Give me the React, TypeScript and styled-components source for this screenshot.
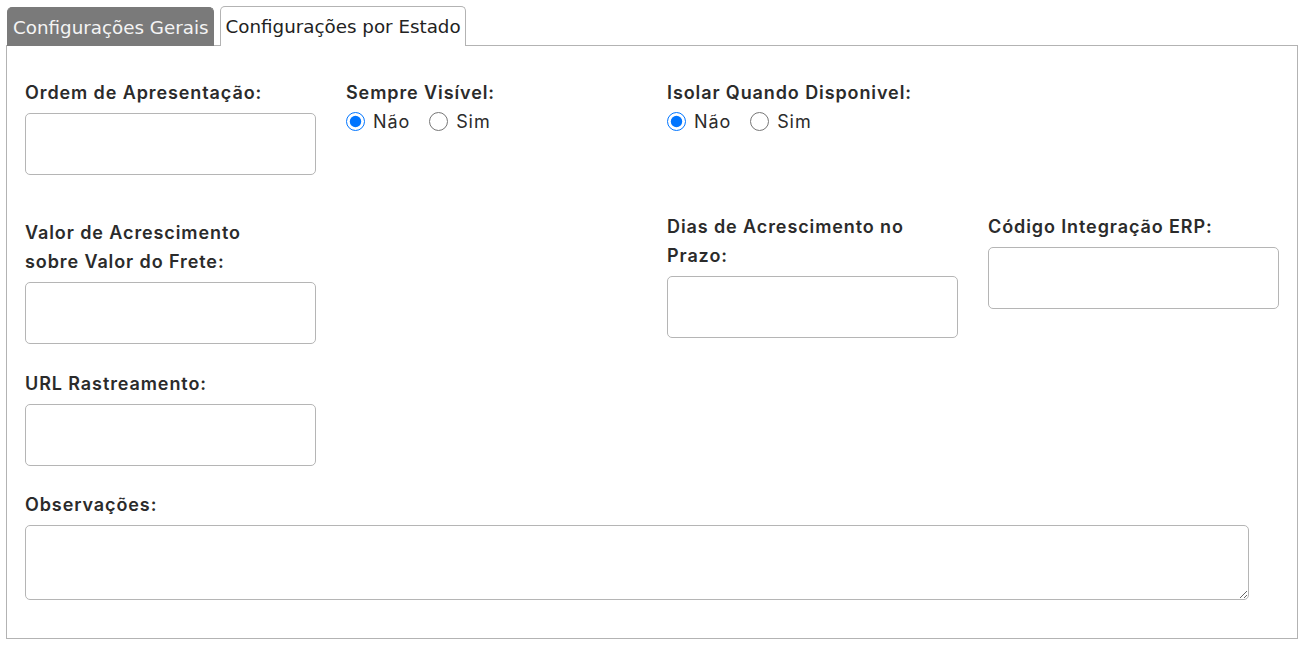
import React, { useState } from 'react';
import styled, { createGlobalStyle } from 'styled-components';

const GlobalStyle = createGlobalStyle`
  html, body {
    margin: 0;
    padding: 0;
    background: #ffffff;
  }
  * {
    box-sizing: border-box;
  }
`;

const labelFont = `'Inter', 'Open Sans', sans-serif`;

const S = {
  Page: styled.div`
    padding: 5px 4px 7px 6px;
  `,
  TabBar: styled.div`
    display: flex;
    align-items: flex-end;
    gap: 6px;
    padding-left: 1px;
    height: 40px;
  `,
  Tab: styled.div<{ $active?: boolean }>`
    display: flex;
    align-items: center;
    padding: 0 4px 0 5px;
    height: ${({ $active }) => ($active ? '39px' : '40px')};
    margin-bottom: -1px;
    border: 1px solid ${({ $active }) => ($active ? '#7a7a7a' : '#b3b3b3')};
    border-bottom: none;
    border-radius: 5px 5px 0 0;
    background: ${({ $active }) => ($active ? '#7a7a7a' : '#ffffff')};
    color: ${({ $active }) => ($active ? '#f4f4f4' : '#222222')};
    font-family: 'DejaVu Sans', Verdana, sans-serif;
    font-size: 18.3px;
    cursor: pointer;
  `,
  Panel: styled.div`
    border: 1px solid #b3b3b3;
    padding: 32px 18px 38px 18px;
  `,
  Row: styled.div<{ $gap: number }>`
    display: grid;
    grid-template-columns: repeat(4, 291px);
    column-gap: 30px;
    align-items: start;
    margin-top: ${({ $gap }) => $gap}px;
  `,
  Field: styled.div<{ $col: number; $offset?: number }>`
    grid-column: ${({ $col }) => $col};
    display: flex;
    flex-direction: column;
    padding-top: ${({ $offset }) => $offset ?? 0}px;
  `,
  Label: styled.label`
    font-family: ${labelFont};
    font-weight: 600;
    font-size: 18px;
    letter-spacing: 0.9px;
    line-height: 29px;
    color: #2b2b2b;
    white-space: nowrap;
  `,
  Input: styled.input`
    margin-top: 6px;
    width: 291px;
    height: 62px;
    border: 1px solid #b5b5b5;
    border-radius: 5px;
    background: #fff;
    outline: none;
  `,
  TextArea: styled.textarea`
    margin-top: 6px;
    width: 1224px;
    height: 75px;
    border: 1px solid #b5b5b5;
    border-radius: 5px;
    background: #fff;
    outline: none;
    resize: both;
    display: block;
  `,
  RadioGroup: styled.div`
    display: flex;
    align-items: center;
    gap: 19px;
  `,
  RadioOption: styled.label`
    display: flex;
    align-items: center;
    gap: 8px;
    font-family: ${labelFont};
    font-size: 18px;
    letter-spacing: 0.9px;
    line-height: 29px;
    color: #2b2b2b;
    cursor: pointer;
  `,
  Radio: styled.input`
    margin: 0;
    width: 19px;
    height: 19px;
    accent-color: #0075ff;
  `
};

const YesNo = ({ name }: { name: string }) => {
  const [value, setValue] = useState('nao');
  return (
    <S.RadioGroup>
      <S.RadioOption>
        <S.Radio type="radio" name={name} checked={value === 'nao'} onChange={() => setValue('nao')} />
        Não
      </S.RadioOption>
      <S.RadioOption>
        <S.Radio type="radio" name={name} checked={value === 'sim'} onChange={() => setValue('sim')} />
        Sim
      </S.RadioOption>
    </S.RadioGroup>
  );
};

const App = () => {
  const [tab, setTab] = useState(0);

  return (
    <>
      <GlobalStyle />
      <S.Page>
        <S.TabBar>
          <S.Tab $active={tab === 0} onClick={() => setTab(0)}>
            Configurações Gerais
          </S.Tab>
          <S.Tab $active={tab === 1} onClick={() => setTab(1)}>
            Configurações por Estado
          </S.Tab>
        </S.TabBar>
        <S.Panel>
          <S.Row $gap={0}>
            <S.Field $col={1}>
              <S.Label>Ordem de Apresentação:</S.Label>
              <S.Input type="text" />
            </S.Field>
            <S.Field $col={2}>
              <S.Label>Sempre Visível:</S.Label>
              <YesNo name="sempreVisivel" />
            </S.Field>
            <S.Field $col={3}>
              <S.Label>Isolar Quando Disponivel:</S.Label>
              <YesNo name="isolar" />
            </S.Field>
          </S.Row>
          <S.Row $gap={37}>
            <S.Field $col={1} $offset={6}>
              <S.Label>
                Valor de Acrescimento
                <br />
                sobre Valor do Frete:
              </S.Label>
              <S.Input type="text" />
            </S.Field>
            <S.Field $col={3}>
              <S.Label>
                Dias de Acrescimento no
                <br />
                Prazo:
              </S.Label>
              <S.Input type="text" />
            </S.Field>
            <S.Field $col={4}>
              <S.Label>Código Integração ERP:</S.Label>
              <S.Input type="text" />
            </S.Field>
          </S.Row>
          <S.Row $gap={25}>
            <S.Field $col={1}>
              <S.Label>URL Rastreamento:</S.Label>
              <S.Input type="text" />
            </S.Field>
          </S.Row>
          <S.Row $gap={24}>
            <S.Field $col={1}>
              <S.Label>Observações:</S.Label>
              <S.TextArea />
            </S.Field>
          </S.Row>
        </S.Panel>
      </S.Page>
    </>
  );
};

export default App;
